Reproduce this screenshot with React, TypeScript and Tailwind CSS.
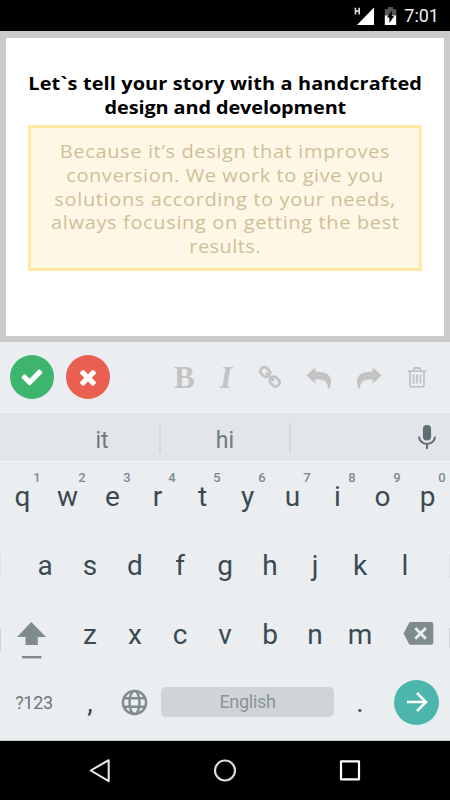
import React from "react";

const TITLE = [
  { text: "Let`s tell your story with a handcrafted", cls: "tracking-[0.12px]" },
  { text: "design and development", cls: "tracking-[-0.1px]" },
];

const BODY = [
  { text: "Because it’s design that improves", cls: "tracking-[0.6px]" },
  { text: "conversion. We work to give you", cls: "tracking-[0.54px]" },
  { text: "solutions according to your needs,", cls: "tracking-[0.6px]" },
  { text: "always focusing on getting the best", cls: "tracking-[0.6px]" },
  { text: "results.", cls: "tracking-[0.4px]" },
];

const ROW1 = ["q", "w", "e", "r", "t", "y", "u", "i", "o", "p"];
const ROW2 = ["a", "s", "d", "f", "g", "h", "j", "k", "l"];
const ROW3 = ["z", "x", "c", "v", "b", "n", "m"];

function StatusBar() {
  return (
    <div className="flex h-[31px] items-center justify-end bg-black pr-[11px] text-white">
      <svg className="mr-[9px] h-[20px] w-[22px]" viewBox="0 0 22 20">
        <path d="M21 1.500V19H4z" fill="#fff" />
        <path d="M2.500 1.800v6.700M6.200 1.800v6.700M2.500 5.100h3.700" stroke="#ddd" strokeWidth="1.600" fill="none" />
      </svg>
      <svg className="mr-[7px] h-[20px] w-[13px]" viewBox="0 0 13 20">
        <path d="M4 1h5v2h3.200v7H.8V3H4z" fill="#555" />
        <path d="M.8 9.500h11.400V19H.8z" fill="#fff" />
        <path d="M7.800 4.500v5.500h2.400L5.400 17v-5.500H3z" fill="#000" />
      </svg>
      <span className="text-[18px] leading-[31px] text-[#eee]">7:01</span>
    </div>
  );
}

function Canvas() {
  return (
    <div className="h-[311px] border-x-[6px] border-b-[6px] border-t-[7px] border-[#cbcbcb] bg-white px-[22px] pt-[33px] font-['Open_Sans',sans-serif]">
      <h1 className="flex flex-col items-center text-[18.500px] font-bold leading-[24px] text-black">
        {TITLE.map((l) => (
          <span key={l.text} className={`scale-x-[1.075] whitespace-nowrap ${l.cls}`}>{l.text}</span>
        ))}
      </h1>
      <p className="mt-[6px] flex h-[146px] flex-col items-center border-[3px] border-[#ffeaa5] bg-[#fff7e5] pt-[11px] text-[18.500px] leading-[23.800px] text-[#cdc099]">
        {BODY.map((l) => (
          <span key={l.text} className={`scale-x-[1.08] whitespace-nowrap ${l.cls}`}>{l.text}</span>
        ))}
      </p>
    </div>
  );
}

function Toolbar() {
  return (
    <div className="flex h-[71px] items-center border-b border-[#f2f4f5] pl-[10px] text-[#c3c3c3]">
      <button className="flex size-[44px] items-center justify-center rounded-full bg-[#3eb56f]">
        <svg className="size-[24px]" viewBox="0 0 1792 1792" fill="#fff">
          <path d="M1671 566q0 40-28 68l-724 724-136 136q-28 28-68 28t-68-28l-136-136-362-362q-28-28-28-68t28-68l136-136q28-28 68-28t68 28l294 295 656-657q28-28 68-28t68 28l136 136q28 28 28 68z" />
        </svg>
      </button>
      <button className="ml-[12px] flex size-[44px] items-center justify-center rounded-full bg-[#ea5f50]">
        <svg className="size-[24px]" viewBox="0 0 1792 1792" fill="#fff">
          <path d="M1490 1322q0 40-28 68l-136 136q-28 28-68 28t-68-28l-294-294-294 294q-28 28-68 28t-68-28l-136-136q-28-28-28-68t28-68l294-294-294-294q-28-28-28-68t28-68l136-136q28-28 68-28t68 28l294 294 294-294q28-28 68-28t68 28l136 136q28 28 28 68t-28 68l-294 294 294 294q28 28 28 68z" />
        </svg>
      </button>
      <span className="ml-[64px] w-[20px] pt-[2px] text-center font-['Liberation_Serif',serif] text-[31px] font-bold leading-[44px]">B</span>
      <span className="ml-[25px] w-[14px] pt-[2px] text-center font-['Liberation_Serif',serif] text-[31px] font-bold italic leading-[44px]">I</span>
      <svg className="ml-[25px] size-[24px]" viewBox="0 0 24 24" fill="none" stroke="currentColor" strokeWidth="2.700">
        <rect x="-5" y="-3.900" width="10" height="7.800" rx="3.200" transform="translate(7.200 7) rotate(45)" />
        <rect x="-5" y="-3.900" width="10" height="7.800" rx="3.200" transform="translate(16.800 16.600) rotate(45)" />
        <path d="M8.800 8.600l6.400 6.400" strokeLinecap="round" />
      </svg>
      <svg className="ml-[24px] mt-[1px] h-[22px] w-[26px]" viewBox="0 0 26 22" fill="currentColor">
        <path d="M.5 8.500L8.800.7q.7-.5.7.4V4.500C20 4.500 25 8 25 14.500q0 3.500-1.300 7h-1.900C22.300 14.500 18 12.200 9.500 12.500v3.400q0 .8-.7.3z" />
      </svg>
      <svg className="ml-[24px] mt-[1px] h-[22px] w-[26px] -scale-x-100" viewBox="0 0 26 22" fill="currentColor">
        <path d="M.5 8.500L8.800.7q.7-.5.7.4V4.500C20 4.500 25 8 25 14.500q0 3.500-1.300 7h-1.900C22.300 14.500 18 12.200 9.500 12.500v3.400q0 .8-.7.3z" />
      </svg>
      <svg className="ml-[25px] h-[22px] w-[20px]" viewBox="0 0 20 22" fill="none" stroke="currentColor" strokeWidth="1.800">
        <path d="M.7 5.200h18.600M6 5L7.200 2h5.600L14 5M3 5.500v13.700q0 1.600 1.600 1.600h10.800q1.600 0 1.600-1.600V5.500M6.600 8.500v9M10 8.500v9M13.400 8.500v9" />
      </svg>
    </div>
  );
}

function Suggestions() {
  return (
    <div className="flex h-[49px] items-center border-b border-[#eff2f4] bg-[#e2e6e9] pt-[2px] text-[23px] text-[#6d7a80]">
      <span className="ml-[45px] w-[114px] pt-[5px] text-center leading-[42px]">it</span>
      <span className="h-[30px] w-[2px] bg-[#d5d9dc]" />
      <span className="w-[128px] pt-[5px] text-center leading-[42px]">hi</span>
      <span className="h-[30px] w-[2px] bg-[#d5d9dc]" />
      <svg className="mb-[2px] ml-[127px] h-[24px] w-[18px]" viewBox="0 0 18 24">
        <rect x="4.900" y="0" width="8.200" height="15.500" rx="4.100" fill="#5f6d74" />
        <path d="M1 11.500a8 7.500 0 0 0 16 0M9 19v5" fill="none" stroke="#5f6d74" strokeWidth="2" />
      </svg>
    </div>
  );
}

function Key({ children }: { children: React.ReactNode }) {
  return <span className="flex w-[45px] items-center justify-center pt-[2px]">{children}</span>;
}

function Keyboard() {
  return (
    <div className="relative h-[279px] border-b border-[#c5ccc8] text-[28px] text-[#3b4a52]">
      <div className="flex h-[68px]">
        {ROW1.map((k, i) => (
          <span key={k} className="relative flex w-[45px] items-center justify-center pt-[2px]">
            {k}
            <span className="absolute left-[27px] top-[7px] w-[20px] text-center text-[13px] font-medium leading-[17px] text-[#7f898d]">
              {(i + 1) % 10}
            </span>
          </span>
        ))}
      </div>
      <div className="flex h-[70px] justify-center">
        {ROW2.map((k) => <Key key={k}>{k}</Key>)}
      </div>
      <div className="flex h-[67px] items-center">
        <svg className="ml-[16px] mr-[21.500px] mt-[14px] h-[38px] w-[30px]" viewBox="0 0 30 38" fill="#7f8b8f">
          <path d="M15.300 0L30 15h-8.200v8H9.500v-8H1z" />
          <path d="M6 34h19.500v2.400H6z" />
        </svg>
        {ROW3.map((k) => <Key key={k}>{k}</Key>)}
        <svg className="ml-[20.500px] h-[23px] w-[31px]" viewBox="0 0 31 23">
          <path d="M7.500 0h20.800q2 0 2 2v18.700q0 2-2 2H7.500q-.8 0-1.300-.8L.5 11.400 6.200.8Q6.700 0 7.500 0z" fill="#7f8b8f" />
          <path d="M12.300 6l10.500 10.700M22.800 6L12.300 16.700" stroke="#eaeef1" strokeWidth="2.700" />
        </svg>
      </div>
      <div className="flex h-[70px] items-center">
        <span className="ml-[14px] w-[40px] text-center text-[18px] tracking-[-0.3px] text-[#6a767b]">?123</span>
        <span className="ml-[26px] w-[20px] pt-[2px] text-center leading-[40px]">,</span>
        <svg className="ml-[21px] size-[27px]" viewBox="0 0 27 27" fill="none" stroke="#7f8b8f" strokeWidth="2.400">
          <circle cx="13.500" cy="13.500" r="11.600" />
          <ellipse cx="13.500" cy="13.500" rx="5" ry="11.600" />
          <path d="M2.600 9.300h21.800M2.600 17.700h21.800" />
        </svg>
        <span className="ml-[13px] h-[30px] w-[173px] rounded-[5px] bg-[#cfd4d7] text-center text-[18px] leading-[30px] tracking-[-0.3px] text-[#8a9599]">English</span>
        <span className="ml-[16px] w-[20px] pt-[2px] text-center leading-[40px]">.</span>
        <span className="ml-[24px] flex size-[45px] items-center justify-center rounded-full bg-[#4cb6ac]">
          <svg className="size-[22px]" viewBox="0 0 22 22" fill="none" stroke="#fff" strokeWidth="2.500">
            <path d="M1 11h18.500M11 2l9 9-9 9" />
          </svg>
        </span>
      </div>
      <span className="absolute left-0 top-[92px] h-[24px] w-px bg-[#d3e5f0]" />
      <span className="absolute right-0 top-[92px] h-[24px] w-px bg-[#dde2e5]" />
      <span className="absolute left-0 top-[166px] h-[24px] w-px bg-[#cfd4d7]" />
      <span className="absolute right-0 top-[166px] h-[20px] w-px bg-[#cfd4d7]" />
    </div>
  );
}

function NavBar() {
  return (
    <div className="flex h-[59px] items-center justify-between bg-black px-[88px]">
      <svg className="size-[24px]" viewBox="0 0 24 24" fill="none" stroke="#eee" strokeWidth="2" strokeLinejoin="round">
        <path d="M20.700 1.200v21L2.700 11.500z" />
      </svg>
      <svg className="size-[24px]" viewBox="0 0 24 24" fill="none" stroke="#ddd" strokeWidth="2.100">
        <circle cx="12" cy="11.500" r="10" />
      </svg>
      <svg className="size-[24px]" viewBox="0 0 24 24" fill="none" stroke="#fff" strokeWidth="2.200" strokeLinejoin="round">
        <path d="M3 2.300h18v18H3z" />
      </svg>
    </div>
  );
}

export default function App() {
  return (
    <div className="h-[800px] w-[450px] overflow-hidden bg-[#eaeef1] font-[Roboto,sans-serif]">
      <StatusBar />
      <Canvas />
      <Toolbar />
      <Suggestions />
      <Keyboard />
      <NavBar />
    </div>
  );
}
